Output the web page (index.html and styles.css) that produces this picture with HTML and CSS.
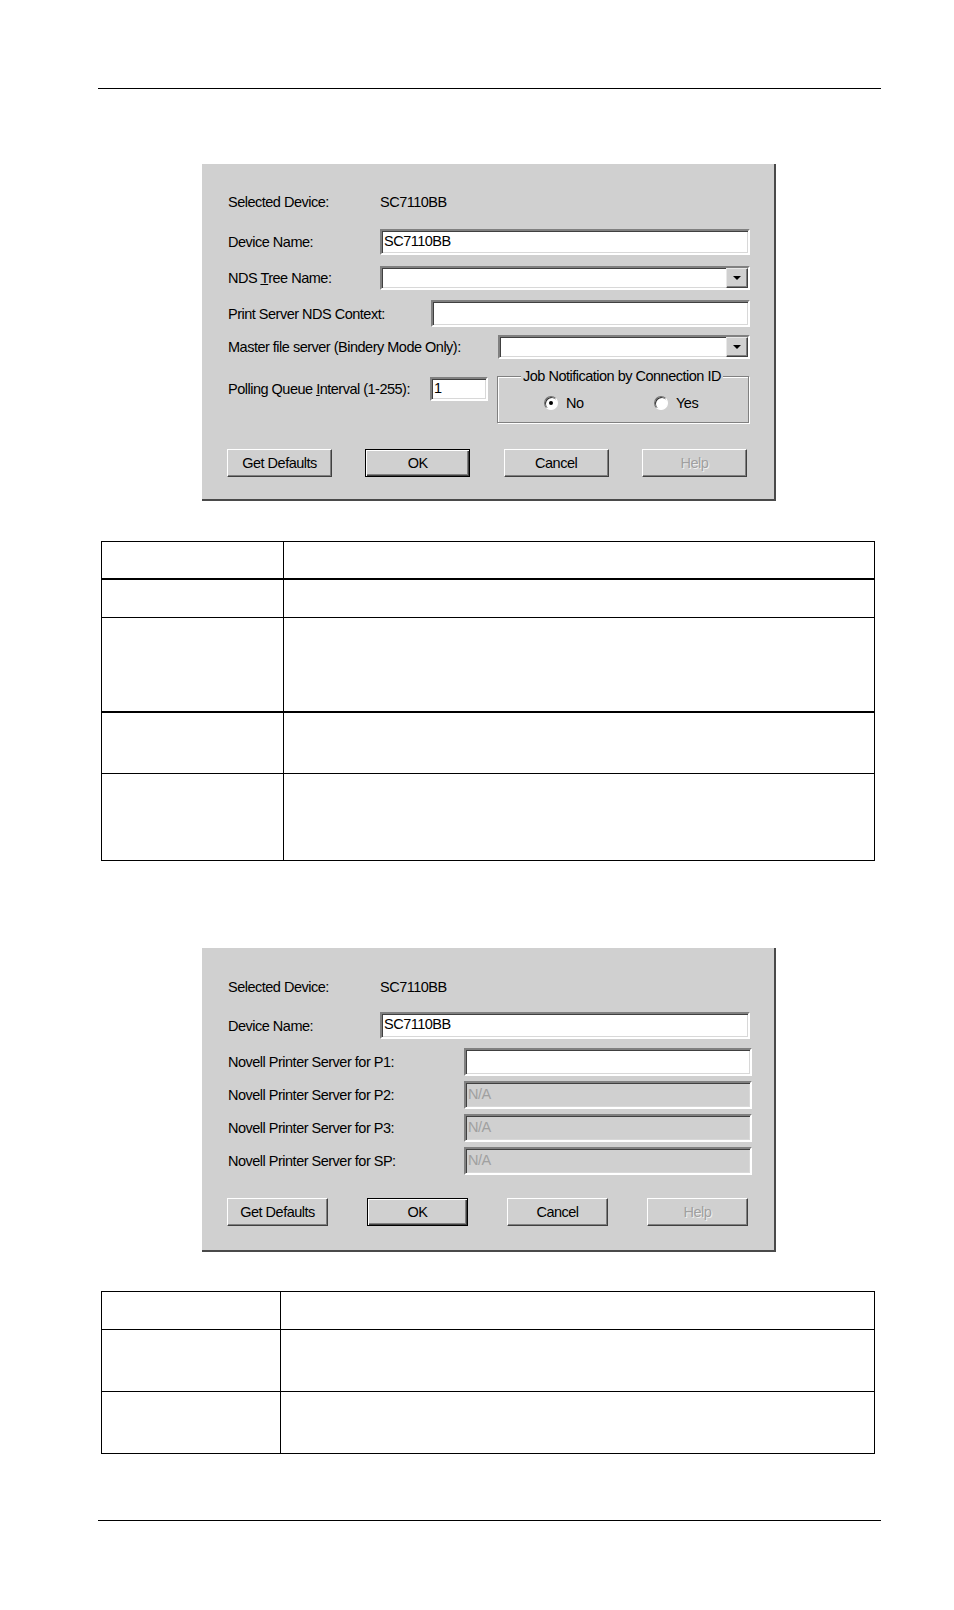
FILE: index.html
```html
<!DOCTYPE html>
<html>
<head>
<meta charset="utf-8">
<title>Novell Settings</title>
<link rel="stylesheet" href="styles.css">
</head>
<body>
<div class="page">
  <div class="rule rule-top"></div>

  <div class="dialog dialog-1">
    <div class="row r-sel"><span class="lbl w-sel">Selected Device:</span><span class="val">SC7110BB</span></div>
    <div class="row r1-dev"><span class="lbl w-dev">Device Name:</span><div class="field grow h26"><span class="ftext">SC7110BB</span></div></div>
    <div class="row r1-tree"><span class="lbl w-dev">NDS <u>T</u>ree Name:</span><div class="field combo grow h24"><div class="combo-btn"><svg width="8" height="4" viewBox="0 0 8 4"><polygon points="0,0 8,0 4,4" fill="#000"/></svg></div></div></div>
    <div class="row r1-ctx"><span class="lbl w-ctx">Print Server NDS Context:</span><div class="field grow h27"></div></div>
    <div class="row r1-master"><span class="lbl w-master">Master file server (Bindery Mode Only):</span><div class="field combo grow h24"><div class="combo-btn"><svg width="8" height="4" viewBox="0 0 8 4"><polygon points="0,0 8,0 4,4" fill="#000"/></svg></div></div></div>
    <div class="r1-poll">
      <div class="row poll-wrap"><span class="lbl w-poll">Polling Queue <u>I</u>nterval (1-255):</span><div class="field poll h24"><span class="ftext">1</span></div></div>
      <div class="group">
        <span class="legend">Job Notification by Connection ID</span>
        <div class="radio radio-first"><span class="circle checked"></span><span>No</span></div>
        <div class="radio"><span class="circle"></span><span>Yes</span></div>
      </div>
    </div>
    <div class="btns btns-1">
      <div class="btn">Get Defaults</div>
      <div class="btn btn-default">OK</div>
      <div class="btn">Cancel</div>
      <div class="btn btn-disabled">Help</div>
    </div>
  </div>

  <table class="tbl tbl-1">
    <tr class="thick"><td class="c1 h37"></td><td></td></tr>
    <tr><td class="c1 h38"></td><td></td></tr>
    <tr class="thick"><td class="c1 h95"></td><td></td></tr>
    <tr><td class="c1 h61"></td><td></td></tr>
    <tr><td class="c1 h88"></td><td></td></tr>
  </table>

  <div class="dialog dialog-2">
    <div class="row r-sel"><span class="lbl w-sel">Selected Device:</span><span class="val">SC7110BB</span></div>
    <div class="row r2-dev"><span class="lbl w-dev">Device Name:</span><div class="field grow h27"><span class="ftext">SC7110BB</span></div></div>
    <div class="row r2-p1"><span class="lbl w-p">Novell Printer Server for P1:</span><div class="field grow pfield h28"></div></div>
    <div class="row r2-p"><span class="lbl w-p">Novell Printer Server for P2:</span><div class="field grow pfield disabled h28"><span class="ftext">N/A</span></div></div>
    <div class="row r2-p"><span class="lbl w-p">Novell Printer Server for P3:</span><div class="field grow pfield disabled h28"><span class="ftext">N/A</span></div></div>
    <div class="row r2-p"><span class="lbl w-p">Novell Printer Server for SP:</span><div class="field grow pfield disabled h28"><span class="ftext">N/A</span></div></div>
    <div class="btns btns-2">
      <div class="btn">Get Defaults</div>
      <div class="btn btn-default">OK</div>
      <div class="btn">Cancel</div>
      <div class="btn btn-disabled">Help</div>
    </div>
  </div>

  <table class="tbl tbl-2">
    <tr><td class="c1b h38"></td><td></td></tr>
    <tr><td class="c1b h62"></td><td></td></tr>
    <tr><td class="c1b h62"></td><td></td></tr>
  </table>

  <div class="rule rule-bottom"></div>
</div>
</body>
</html>
```
FILE: styles.css
```css
html, body {
  margin: 0;
  padding: 0;
  background: #fff;
}
.page {
  width: 954px;
  height: 1610px;
  overflow: hidden;
}
.rule {
  margin-left: 98px;
  width: 783px;
  height: 1px;
  background: #000;
}
.rule-top { margin-top: 88px; }
.rule-bottom { margin-top: 66px; }

.dialog {
  box-sizing: border-box;
  width: 574px;
  margin-left: 202px;
  background: #d0d0d0;
  border-right: 2px solid #4a4a4a;
  border-bottom: 2px solid #4a4a4a;
  padding: 28px 24px 22px 26px;
  font-family: "Liberation Sans", Arial, sans-serif;
  font-size: 14.5px;
  letter-spacing: -0.5px;
  color: #000;
}
.dialog-1 { margin-top: 75px; }
.dialog-2 { margin-top: 87px; padding-top: 29px; padding-bottom: 24px; }

.row { display: flex; align-items: center; }
.r-sel { height: 20px; }
.lbl { flex: none; white-space: nowrap; }
.w-sel { width: 152px; }
.w-dev { width: 152px; }
.w-ctx { width: 203px; }
.w-master { width: 270px; }
.w-poll { width: 202px; }
.w-p { width: 236px; }

.grow { flex: 1 1 auto; }
.h24 { height: 24px; }
.h26 { height: 26px; }
.h27 { height: 27px; }
.h28 { height: 28px; }

.r1-dev { margin-top: 17px; }
.r1-tree { margin-top: 11px; }
.r1-ctx { margin-top: 10px; }
.r1-master { margin-top: 8px; }
.r1-poll { margin-top: 17px; display: flex; align-items: flex-start; }

.r2-dev { margin-top: 15px; }
.r2-p1 { margin-top: 9px; }
.r2-p { margin-top: 5px; }
.pfield { margin-right: -2px; }

.field {
  box-sizing: border-box;
  background: #fff;
  border: 2px solid;
  border-color: #808080 #ffffff #ffffff #808080;
  box-shadow: inset 1px 1px 0 #404040, inset -1px -1px 0 #d8d8d8;
  padding-left: 2px;
  display: flex;
  align-items: center;
  white-space: nowrap;
}
.field.disabled {
  background: #d0d0d0;
  color: #a0a0a0;
}
.ftext { line-height: 18px; margin-top: -3px; }

.combo { justify-content: flex-end; padding-left: 0; }
.combo-btn {
  box-sizing: border-box;
  width: 22px;
  height: 100%;
  background: #d0d0d0;
  border: 1px solid;
  border-color: #e8e8e8 #404040 #404040 #e8e8e8;
  box-shadow: inset -1px -1px 0 #808080;
  display: flex;
  align-items: center;
  justify-content: center;
}

.poll-wrap { margin-top: 1px; }
.poll { width: 58px; flex: none; }

.group {
  position: relative;
  box-sizing: border-box;
  width: 252px;
  height: 47px;
  margin-left: 9px;
  border: 1px solid #808080;
  box-shadow: inset 1px 1px 0 #fff, 1px 1px 0 #fff;
  display: flex;
  padding: 17px 0 0 46px;
}
.legend {
  position: absolute;
  left: 23px;
  top: -10px;
  line-height: 18px;
  padding: 0 2px;
  background: #d0d0d0;
  white-space: nowrap;
}
.radio {
  display: flex;
  align-items: center;
  height: 18px;
}
.radio-first { width: 110px; }
.circle {
  box-sizing: border-box;
  width: 14px;
  height: 14px;
  border-radius: 50%;
  background: #fff;
  border: 1px solid;
  border-color: #707070 #ffffff #ffffff #707070;
  box-shadow: inset 1px 1px 0 #303030;
  margin-right: 8px;
  display: flex;
  align-items: center;
  justify-content: center;
}
.circle.checked::after {
  content: "";
  width: 4px;
  height: 4px;
  border-radius: 50%;
  background: #000;
}

.btns {
  display: flex;
  justify-content: space-between;
  margin-left: -1px;
}
.btns-1 { margin-top: 26px; margin-right: 3px; }
.btns-2 { margin-top: 23px; margin-right: 2px; }
.btn {
  box-sizing: border-box;
  height: 28px;
  width: 105px;
  background: #d0d0d0;
  border: 1px solid;
  border-color: #ffffff #404040 #404040 #ffffff;
  box-shadow: inset -1px -1px 0 #808080;
  display: flex;
  align-items: center;
  justify-content: center;
  white-space: nowrap;
}
.btns-2 .btn { width: 101px; }
.btn-default {
  border: 1px solid #000;
  box-shadow: inset 1px 1px 0 #fff, inset -1px -1px 0 #404040, inset -2px -2px 0 #808080;
}
.btn-disabled {
  color: #a0a0a0;
  text-shadow: 1px 1px 0 #f0f0f0;
}

.tbl {
  border-collapse: collapse;
  margin-left: 101px;
  width: 774px;
}
.tbl td {
  border: 1px solid #000;
  padding: 0;
}
.tbl tr.thick td { border-bottom: 2px solid #000; }
.tbl-1 { margin-top: 40px; }
.tbl-2 { margin-top: 39px; }
.c1 { width: 181px; }
.c1b { width: 178px; }
.h37 { height: 36px; }
.h38 { height: 37px; }
.h95 { height: 93px; }
.h61 { height: 60px; }
.h88 { height: 86px; }
.h62 { height: 61px; }
```
